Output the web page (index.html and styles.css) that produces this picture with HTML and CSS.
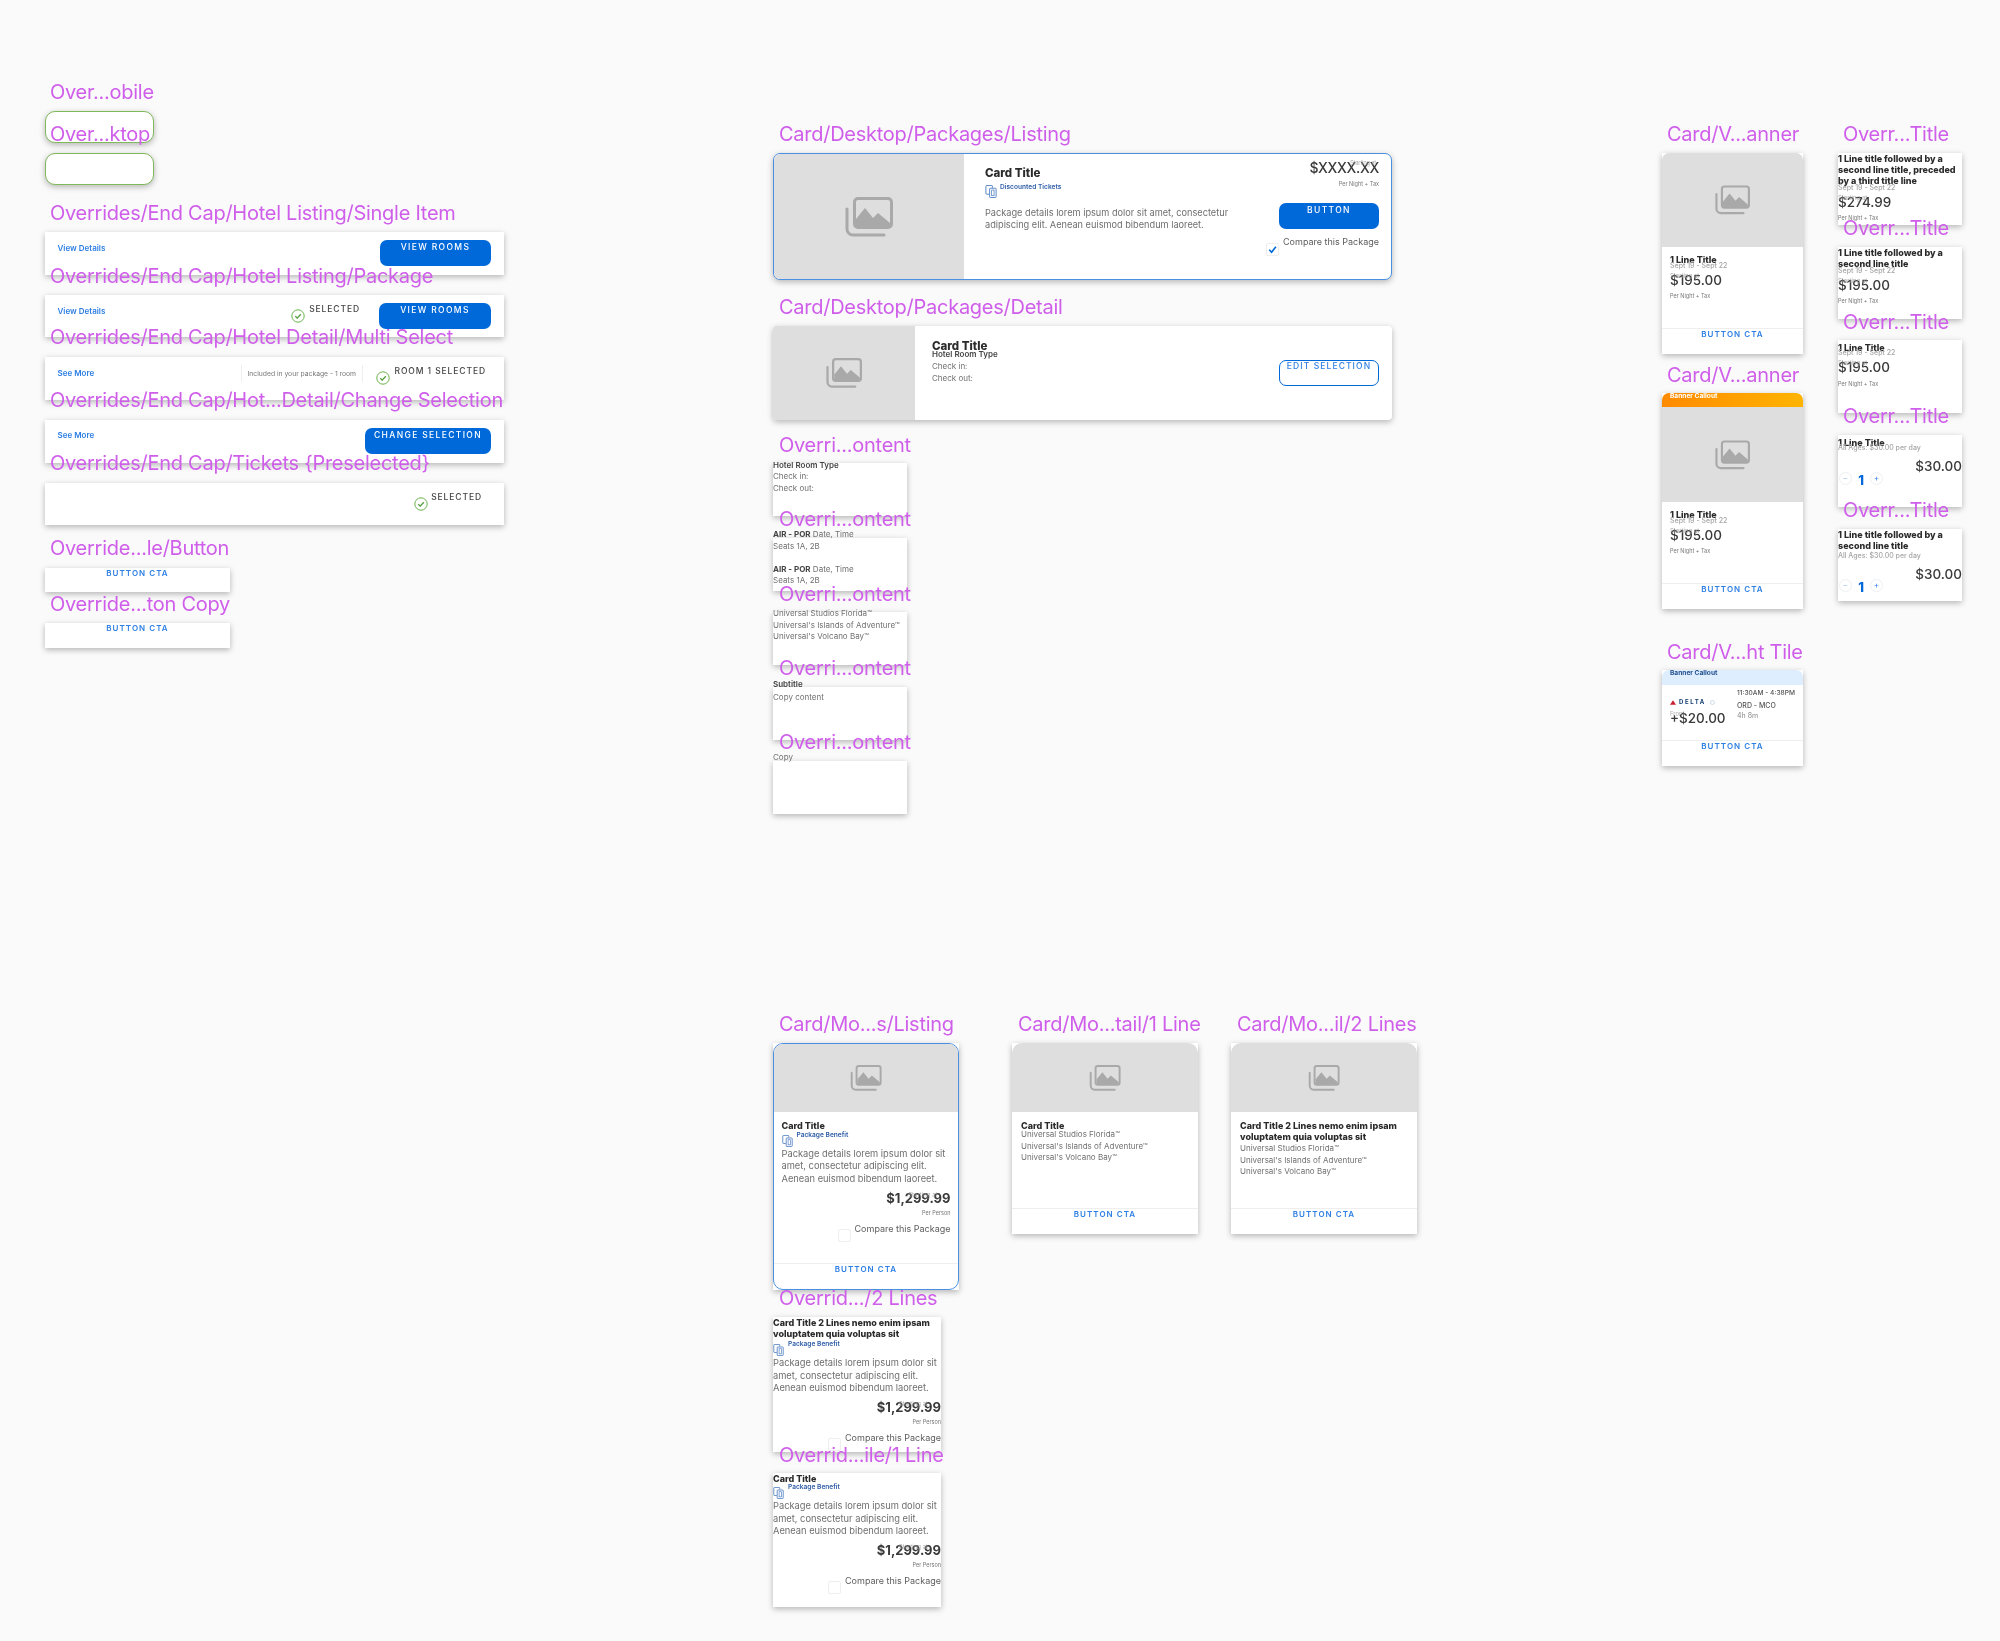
FILE: index.html
```html
<!DOCTYPE html>
<html lang="en">
<head>
<meta charset="utf-8">
<title>Card components</title>
<link rel="stylesheet" href="styles.css">
</head>
<body>
<svg class="defs" aria-hidden="true">
  <symbol id="ph" viewBox="0 0 48 40">
    <path d="M2 12v20a6 6 0 0 0 6 6h31" fill="none" stroke="#a9a9a9" stroke-width="3" stroke-linecap="round"/>
    <rect x="9.5" y="1.5" width="37" height="29" rx="3.5" fill="#dedede" stroke="#a9a9a9" stroke-width="3"/>
    <path d="M11 29V22l9-11 8 10 5-5 12 10v3a1 1 0 0 1-1 1H12a1 1 0 0 1-1-1z" fill="#a9a9a9"/>
  </symbol>
  <symbol id="tk" viewBox="0 0 12 14">
    <path d="M7.5 3V1.2a.7.7 0 0 0-.7-.7H1.2a.7.7 0 0 0-.7.7v8a.7.7 0 0 0 .7.7H4" fill="none" stroke="#4f7fc4" stroke-width="1"/>
    <rect x="4.5" y="3.5" width="7" height="10" rx=".8" fill="#fff" stroke="#4f7fc4" stroke-width="1"/>
    <rect x="6.7" y="5.5" width="2.6" height="6" fill="none" stroke="#4f7fc4" stroke-width=".8"/>
  </symbol>
  <symbol id="ok" viewBox="0 0 14 14">
    <circle cx="7" cy="7" r="6.2" fill="#fff" stroke="#69b34c" stroke-width="1"/>
    <path d="M4.3 7.3l1.9 1.8 3.6-3.8" fill="none" stroke="#4f9e38" stroke-width="1.3"/>
  </symbol>
</svg>
<main class="canvas">

<div class="f fm1"></div>
<div class="f fm2"></div>

<div class="f ec ec1"><a class="lnk">View Details</a><span class="ecr"><span class="btn b111">VIEW ROOMS</span></span></div>
<div class="f ec ec2"><a class="lnk">View Details</a><span class="ecr"><svg class="okc okc2"><use href="#ok"/></svg><span class="sel sel2">SELECTED</span><span class="btn b112">VIEW ROOMS</span></span></div>
<div class="f ec ec3"><a class="lnk">See More</a><span class="ecr ecr3"><span class="inc">Included in your package - 1 room</span><svg class="okc okc3"><use href="#ok"/></svg><span class="sel">ROOM 1 SELECTED</span></span></div>
<div class="f ec ec4"><a class="lnk lnk4">See More</a><span class="ecr"><span class="btn b126">CHANGE SELECTION</span></span></div>
<div class="f ec ec5"><span class="ecr ecr5"><svg class="okc okc5"><use href="#ok"/></svg><span class="sel">SELECTED</span></span></div>
<div class="f bf bf1"><span class="cta">BUTTON CTA</span></div>
<div class="f bf bf2"><span class="cta">BUTTON CTA</span></div>

<article class="f dk dl">
  <div class="dimg dimg1"><svg class="ph ph48"><use href="#ph"/></svg></div>
  <div class="dmain">
    <h3 class="ttl ttl-d">Card Title</h3>
    <div class="ben"><svg class="tk"><use href="#tk"/></svg><span class="bent">Discounted Tickets</span></div>
    <p class="desc desc-d">Package details lorem ipsum dolor sit amet, consectetur adipiscing elit. Aenean euismod bibendum laoreet.</p>
  </div>
  <div class="dside">
    <div class="price p-d"><span class="pre">Starting at</span>$XXXX.XX</div>
    <div class="per">Per Night + Tax</div>
    <span class="btn b100">BUTTON</span>
    <div class="cmp cmp-d"><span class="cb cb-on"><svg viewBox="0 0 12 12"><path d="M2.5 6.3l2.5 2.7 4.7-6" fill="none" stroke="#0069d9" stroke-width="1.8"/></svg></span><span class="cmpt">Compare this Package</span></div>
  </div>
</article>

<article class="f dk dd">
  <div class="dimg dimg2"><svg class="ph ph36"><use href="#ph"/></svg></div>
  <div class="dmain dmain2">
    <h3 class="ttl ttl-d">Card Title</h3>
    <div class="sub sub-d">Hotel Room Type</div>
    <p class="ln ln-d">Check in:</p>
    <p class="ln">Check out:</p>
  </div>
  <div class="dside dside2"><span class="btn-o">EDIT SELECTION</span></div>
</article>

<div class="f oc oc1"><div class="sub sub-o">Hotel Room Type</div><p class="ln ln-o">Check in:</p><p class="ln">Check out:</p></div>
<div class="f oc oc2"><p class="ln ln-a"><b>AIR - POR</b> Date, Time</p><p class="ln">Seats 1A, 2B</p><p class="ln ln-gap"><b>AIR - POR</b> Date, Time</p><p class="ln">Seats 1A, 2B</p></div>
<div class="f oc oc3"><p class="ln ln-u">Universal Studios Florida™</p><p class="ln">Universal's Islands of Adventure™</p><p class="ln">Universal's Volcano Bay™</p></div>
<div class="f oc oc4"><div class="sub sub-s">Subtitle</div><p class="ln ln-c">Copy content</p></div>
<div class="f oc oc5"><p class="ln ln-a">Copy</p></div>

<article class="f vc vc1"><div class="vin">
  <div class="vimg"><svg class="ph ph35"><use href="#ph"/></svg></div>
  <div class="vbody"><h3 class="ttl ttl-v">1 Line Title</h3><div class="sept">Sept 19 - Sept 22</div><div class="price p-v"><span class="pre pre-l">Starting at</span>$195.00</div><div class="per per-v">Per Night + Tax</div></div>
  <div class="foot"><span class="cta">BUTTON CTA</span></div>
</div></article>

<article class="f vc vc2"><div class="vin">
  <div class="banner b-or">Banner Callout</div>
  <div class="vimg"><svg class="ph ph35"><use href="#ph"/></svg></div>
  <div class="vbody"><h3 class="ttl ttl-v">1 Line Title</h3><div class="sept">Sept 19 - Sept 22</div><div class="price p-v"><span class="pre pre-l">Starting at</span>$195.00</div><div class="per per-v">Per Night + Tax</div></div>
  <div class="foot"><span class="cta">BUTTON CTA</span></div>
</div></article>

<article class="f vc vc3"><div class="vin">
  <div class="banner b-bl">Banner Callout</div>
  <div class="fl">
    <div class="fl-l">
      <div class="delta"><svg class="dt" viewBox="0 0 8 6"><path d="M4 0l4 6H0z" fill="#c8202f"/></svg><span class="dn">DELTA</span><span class="dg"></span></div>
      <div class="fprice"><span class="pre pre-l">From</span>+$20.00</div>
    </div>
    <div class="fl-r"><div class="ft">11:30AM - 4:38PM</div><div class="ft ft2">ORD - MCO</div><div class="fd">4h 8m</div></div>
  </div>
  <div class="foot foot-f"><span class="cta">BUTTON CTA</span></div>
</div></article>

<div class="f ot ot1"><h3 class="ttl ttl-o">1 Line title followed by a second line title, preceded by a third title line</h3><div class="sept sept-o">Sept 19 - Sept 22</div><div class="price p-v"><span class="pre pre-l">Starting at</span>$274.99</div><div class="per per-v">Per Night + Tax</div></div>
<div class="f ot ot2"><h3 class="ttl ttl-o">1 Line title followed by a second line title</h3><div class="sept sept-o">Sept 19 - Sept 22</div><div class="price p-v"><span class="pre pre-l">Starting at</span>$195.00</div><div class="per per-v">Per Night + Tax</div></div>
<div class="f ot ot3"><h3 class="ttl ttl-v ttl-o1">1 Line Title</h3><div class="sept sept-1">Sept 19 - Sept 22</div><div class="price p-v"><span class="pre pre-l">Starting at</span>$195.00</div><div class="per per-v per-1">Per Night + Tax</div></div>
<div class="f ot ot4"><h3 class="ttl ttl-v ttl-o1">1 Line Title</h3><div class="sept sept-1">All Ages: $30.00 per day</div><div class="qrow"><div class="qty qty1"><span class="qb qb-m">−</span><span class="qn">1</span><span class="qb">+</span></div><div class="price p-v">$30.00</div></div></div>
<div class="f ot ot5"><h3 class="ttl ttl-o">1 Line title followed by a second line title</h3><div class="sept sept-5">All Ages: $30.00 per day</div><div class="qrow"><div class="qty qty5"><span class="qb qb-m">−</span><span class="qn">1</span><span class="qb">+</span></div><div class="price p-v">$30.00</div></div></div>

<article class="f mc ml"><div class="min min-b">
  <div class="mimg"><svg class="ph ph32"><use href="#ph"/></svg></div>
  <div class="mbody mbody-l">
    <h3 class="ttl ttl-m">Card Title</h3>
    <div class="ben ben-m"><svg class="tk tk-m"><use href="#tk"/></svg><span class="bent bent-m">Package Benefit</span></div>
    <p class="desc desc-m">Package details lorem ipsum dolor sit amet, consectetur adipiscing elit. Aenean euismod bibendum laoreet.</p>
    <div class="price p-m"><span class="pre">Starting at</span>$1,299.99</div>
    <div class="per per-m">Per Person</div>
    <div class="cmp cmp-m"><span class="cb"></span><span class="cmpt">Compare this Package</span></div>
  </div>
  <div class="foot"><span class="cta">BUTTON CTA</span></div>
</div></article>

<article class="f mc md1"><div class="min">
  <div class="mimg"><svg class="ph ph32"><use href="#ph"/></svg></div>
  <div class="mbody mbody-d">
    <h3 class="ttl ttl-m">Card Title</h3>
    <p class="ln ln-1">Universal Studios Florida™</p><p class="ln">Universal's Islands of Adventure™</p><p class="ln">Universal's Volcano Bay™</p>
  </div>
  <div class="foot"><span class="cta">BUTTON CTA</span></div>
</div></article>

<article class="f mc md2"><div class="min">
  <div class="mimg"><svg class="ph ph32"><use href="#ph"/></svg></div>
  <div class="mbody mbody-d">
    <h3 class="ttl ttl-o">Card Title 2 Lines nemo enim ipsam voluptatem quia voluptas sit</h3>
    <p class="ln ln-2">Universal Studios Florida™</p><p class="ln">Universal's Islands of Adventure™</p><p class="ln">Universal's Volcano Bay™</p>
  </div>
  <div class="foot"><span class="cta">BUTTON CTA</span></div>
</div></article>

<div class="f om om2"><h3 class="ttl ttl-o">Card Title 2 Lines nemo enim ipsam voluptatem quia voluptas sit</h3>
  <div class="ben ben-o2"><svg class="tk tk-m"><use href="#tk"/></svg><span class="bent bent-m">Package Benefit</span></div>
  <p class="desc desc-m">Package details lorem ipsum dolor sit amet, consectetur adipiscing elit. Aenean euismod bibendum laoreet.</p>
  <div class="price p-m"><span class="pre">Starting at</span>$1,299.99</div><div class="per per-m">Per Person</div>
  <div class="cmp cmp-m"><span class="cb"></span><span class="cmpt">Compare this Package</span></div></div>
<div class="f om om1"><h3 class="ttl ttl-o">Card Title</h3>
  <div class="ben ben-m"><svg class="tk tk-m"><use href="#tk"/></svg><span class="bent bent-m">Package Benefit</span></div>
  <p class="desc desc-m">Package details lorem ipsum dolor sit amet, consectetur adipiscing elit. Aenean euismod bibendum laoreet.</p>
  <div class="price p-m"><span class="pre">Starting at</span>$1,299.99</div><div class="per per-m">Per Person</div>
  <div class="cmp cmp-m"><span class="cb"></span><span class="cmpt">Compare this Package</span></div></div>

<span class="lbl a1">Over...obile</span>
<span class="lbl a2">Over...ktop</span>
<span class="lbl a3">Overrides/End Cap/Hotel Listing/Single Item</span>
<span class="lbl a4">Overrides/End Cap/Hotel Listing/Package</span>
<span class="lbl a5">Overrides/End Cap/Hotel Detail/Multi Select</span>
<span class="lbl a6">Overrides/End Cap/Hot...Detail/Change Selection</span>
<span class="lbl a7">Overrides/End Cap/Tickets {Preselected}</span>
<span class="lbl a8">Override...le/Button</span>
<span class="lbl a9">Override...ton Copy</span>
<span class="lbl c1">Card/Desktop/Packages/Listing</span>
<span class="lbl c2">Card/Desktop/Packages/Detail</span>
<span class="lbl c3">Overri...ontent</span>
<span class="lbl c4">Overri...ontent</span>
<span class="lbl c5">Overri...ontent</span>
<span class="lbl c6">Overri...ontent</span>
<span class="lbl c7">Overri...ontent</span>
<span class="lbl r1">Card/V...anner</span>
<span class="lbl r2">Card/V...anner</span>
<span class="lbl r3">Card/V...ht Tile</span>
<span class="lbl s1">Overr...Title</span>
<span class="lbl s2">Overr...Title</span>
<span class="lbl s3">Overr...Title</span>
<span class="lbl s4">Overr...Title</span>
<span class="lbl s5">Overr...Title</span>
<span class="lbl m1">Card/Mo...s/Listing</span>
<span class="lbl m2">Card/Mo...tail/1 Line</span>
<span class="lbl m3">Card/Mo...il/2 Lines</span>
<span class="lbl m4">Overrid.../2 Lines</span>
<span class="lbl m5">Overrid...ile/1 Line</span>
</main>
</body>
</html>
```
FILE: styles.css
```css
* { box-sizing: border-box; }
html, body { margin: 0; padding: 0; background: #fafafa; }
body { font-family: "Inter", "Liberation Sans", sans-serif; color: #666; }
h3, p { margin: 0; font-weight: normal; }
.defs { position: absolute; width: 0; height: 0; }
.canvas { position: relative; width: 2000px; height: 1641px; overflow: hidden; background: #fafafa; filter: blur(.45px); }

/* free-canvas frames */
.f { position: absolute; background: #fff; box-shadow: 0 2px 6px rgba(0,0,0,.28); }
.lbl { position: absolute; font-size: 20px; line-height: 24px; letter-spacing: -.26px; color: #cf5eea; white-space: nowrap; }
.a1,.a2,.a3,.a4,.a5,.a6,.a7,.a8,.a9 { left: 50px; }
.a1 { top: 80px; } .a2 { top: 122px; } .a3 { top: 201px; } .a4 { top: 264px; } .a5 { top: 325px; }
.a6 { top: 388px; } .a7 { top: 451px; } .a8 { top: 536px; } .a9 { top: 592px; }
.c1,.c2,.c3,.c4,.c5,.c6,.c7,.m1,.m4,.m5 { left: 779px; }
.c1 { top: 122px; } .c2 { top: 295px; } .c3 { top: 433px; } .c4 { top: 507px; } .c5 { top: 582px; } .c6 { top: 656px; } .c7 { top: 730px; }
.r1,.r2,.r3 { left: 1667px; }
.r1 { top: 122px; } .r2 { top: 363px; } .r3 { top: 640px; }
.s1,.s2,.s3,.s4,.s5 { left: 1843px; }
.s1 { top: 122px; } .s2 { top: 216px; } .s3 { top: 310px; } .s4 { top: 404px; } .s5 { top: 498px; }
.m1,.m2,.m3 { top: 1012px; } .m2 { left: 1018px; } .m3 { left: 1237px; }
.m4 { top: 1286px; } .m5 { top: 1443px; }

.fm1,.fm2 { left: 45px; width: 109px; height: 32px; border: 1.5px solid #7fb95a; border-radius: 10px; }
.fm1 { top: 111px; } .fm2 { top: 153px; }

/* end caps */
.ec { left: 45px; width: 459px; display: flex; align-items: flex-start; padding: 8px 13px 0 12.5px; }
.ec1 { top: 232px; height: 43px; } .ec2 { top: 295px; height: 42px; } .ec3 { top: 357px; height: 43px; }
.ec4 { top: 420px; height: 43px; } .ec5 { top: 483px; height: 42px; }
.lnk { font-size: 8px; line-height: 16px; font-weight: 600; color: #2d7fe3; }
.lnk4 { margin-top: -1px; }
.ecr { margin-left: auto; display: flex; align-items: flex-start; }
.btn { display: block; height: 26px; border-radius: 7px; background: #0069d9; color: #fff; font-size: 8.5px; font-weight: 500; letter-spacing: 1.35px; text-align: center; line-height: 13px; padding-top: 1px; white-space: nowrap; }
.b111 { width: 111px; } .b112 { width: 112px; margin-left: 19px; } .b126 { width: 126px; }
.b100 { width: 100px; margin-top: 15px; }
.okc { display: block; width: 14px; height: 14px; margin-right: 4px; }
.okc2 { margin-top: 6px; } .okc3 { margin-top: 6px; margin-left: 13px; margin-right: 5px; } .okc5 { margin-top: 6px; margin-right: 3px; }
.sel { font-size: 8.5px; line-height: 13px; font-weight: 500; letter-spacing: .9px; color: #444; white-space: nowrap; }
.ecr3 { padding-right: 5px; }
.ecr5 { padding-right: 9px; }
.inc { width: 122px; font-size: 6.75px; line-height: 17px; height: 17px; padding: 0 6px; color: #777; border-left: 1px solid #eee; border-right: 1px solid #eee; white-space: nowrap; }
.bf { left: 45px; width: 185px; text-align: center; }
.bf1 { top: 568px; height: 24px; } .bf2 { top: 623px; height: 25px; }
.cta { display: block; font-size: 8px; font-weight: 600; letter-spacing: 1.05px; color: #2d7fe3; line-height: 11px; white-space: nowrap; text-align: center; }

/* shared text */
.ttl { font-weight: 800; color: #2b2b2b; }
.ttl-d { font-size: 11.5px; line-height: 12px; }
.ttl-v { font-size: 9px; line-height: 10px; }
.ttl-o { font-size: 9px; line-height: 11px; }
.ttl-m { font-size: 9px; line-height: 12px; }
.ttl-o1 { padding-top: 3px; box-sizing: content-box; }
.sub { font-size: 8px; line-height: 9px; font-weight: 600; color: #444; }
.ln { font-size: 8px; line-height: 11.5px; color: #707070; white-space: nowrap; }
.ln b { font-weight: 700; color: #444; }
.desc { color: #6e6e6e; }
.desc-d { width: 256px; margin-top: 9px; font-size: 9.2px; line-height: 12.2px; }
.desc-m { width: 168px; margin-top: 1px; font-size: 9.3px; line-height: 12.7px; }
.ben { display: flex; gap: 3px; margin-top: 6px; }
.tk { display: block; width: 12px; height: 13px; }
.tk-m { width: 11px; height: 12px; }
.bent { font-size: 6.6px; line-height: 8px; font-weight: 600; color: #2f5ea8; margin-top: -2px; white-space: nowrap; }
.bent-m { margin-top: -4px; }
.ben-m { margin-top: 3px; gap: 4px; }
.ben-o2 { margin-top: 5px; gap: 4px; }
.price { position: relative; color: #3a3a3a; font-weight: 500; white-space: nowrap; }
.pre { position: absolute; right: 3px; top: 0; font-size: 6px; line-height: 8px; font-weight: 400; color: #999; opacity: .8; }
.pre-l { left: 0; right: auto; }
.p-d { font-size: 14px; line-height: 18px; letter-spacing: -.3px; text-align: right; }
.p-v { font-size: 13.5px; line-height: 16px; margin-top: 2px; }
.p-m { font-size: 13px; line-height: 16px; margin-top: 4px; text-align: right; font-weight: 700; }
.p-m .pre { right: 13px; top: 1px; }
.per { font-size: 5.5px; line-height: 8px; color: #777; margin-top: 3px; text-align: right; white-space: nowrap; }
.per-v { margin-top: 4px; text-align: left; }
.per-m { margin-top: 3px; }
.per-1 { margin-top: 5px; }
.sept { font-size: 7px; line-height: 8px; font-weight: 500; color: #a5a5a5; margin-top: -3px; white-space: nowrap; }
.sept-o { margin-top: -2px; }
.sept-1 { margin-top: -4px; }
.sept-5 { margin-top: 1px; }
.cmp { display: flex; justify-content: flex-end; gap: 4px; white-space: nowrap; }
.cmpt { font-size: 9px; line-height: 12px; color: #5c5c5c; }
.cb { display: block; width: 13px; height: 13px; background: #fff; border: 1px solid #eee; border-radius: 2px; margin-top: 7px; }
.cb svg { display: block; width: 11px; height: 11px; }
.cmp-d { margin-top: 7px; }
.cmp-m { margin-top: 6px; }
.cmp-m .cb { margin-top: 6px; }

/* desktop cards */
.dk { left: 773px; width: 619px; display: flex; overflow: hidden; }
.dl { top: 153px; height: 127px; border: 1.5px solid #4a90e2; border-radius: 7px; }
.dd { top: 326px; height: 94px; border-radius: 4px; }
.dimg { background: #dedede; display: flex; align-items: center; justify-content: center; flex: none; }
.dimg1 { width: 190px; } .dimg2 { width: 142px; }
.ph { display: block; }
.ph48 { width: 48px; height: 40px; } .ph36 { width: 36px; height: 30px; } .ph35 { width: 35px; height: 30px; } .ph32 { width: 32px; height: 26px; }
.dmain { flex: 1; padding: 13px 0 0 21px; }
.dmain2 { padding: 14px 0 0 17px; }
.sub-d { margin-top: -2px; }
.ln-d { margin-top: 2px; }
.dside { display: flex; flex-direction: column; align-items: flex-end; padding: 5px 12px 0 0; width: 112px; flex: none; }
.dside2 { padding: 34px 13px 0 0; width: 113px; }
.btn-o { display: block; width: 100px; height: 26px; border: 1.5px solid #0069d9; border-radius: 7px; text-align: center; font-size: 8.5px; line-height: 11px; font-weight: 500; letter-spacing: 1.1px; color: #2d7fe3; white-space: nowrap; }

/* override content */
.oc { left: 773px; width: 134px; height: 53px; }
.oc1 { top: 463px; } .oc2 { top: 538px; } .oc3 { top: 612px; } .oc4 { top: 687px; } .oc5 { top: 761px; }
.sub-o { margin-top: -2px; } .ln-o { margin-top: 1px; }
.ln-a { margin-top: -9px; } .ln-gap { margin-top: 11.5px; } .ln-u { margin-top: -4px; }
.sub-s { margin-top: -7px; } .ln-c { margin-top: 3px; }

/* vertical cards */
.vc { left: 1662px; width: 141px; }
.vc1 { top: 153px; height: 201px; } .vc2 { top: 393px; height: 216px; } .vc3 { top: 670px; height: 96px; }
.vin { height: 100%; display: flex; flex-direction: column; border-radius: 7px; overflow: hidden; }
.vimg { height: 94px; background: #dedede; display: flex; align-items: center; justify-content: center; flex: none; }
.vc2 .vimg { height: 95px; }
.vbody { flex: 1; padding: 8px 8px 0; }
.foot { height: 26px; flex: none; border-top: 1px solid #eee; }
.banner { height: 14px; font-size: 6.6px; line-height: 6px; font-weight: 700; padding-left: 8px; flex: none; }
.b-or { background: linear-gradient(90deg, #ff8a00, #ffb400); color: #fff; }
.b-bl { height: 15px; background: #deeeff; color: #23508f; }
.fl { flex: 1; display: flex; padding: 3px 0 0 8px; }
.fl-l { width: 67px; flex: none; }
.delta { display: flex; align-items: center; gap: 3px; margin-top: 10px; height: 8px; }
.dt { display: block; width: 6px; height: 5px; }
.dn { font-size: 6px; line-height: 8px; font-weight: 700; letter-spacing: 1.6px; color: #123d73; }
.dg { width: 5px; height: 5px; border-radius: 50%; border: 1px solid #cfdbe8; margin-left: 1px; }
.fprice { position: relative; font-size: 13.5px; line-height: 16px; margin-top: 4px; color: #3a3a3a; font-weight: 500; white-space: nowrap; }
.ft { font-size: 6.6px; line-height: 9px; font-weight: 500; color: #555; white-space: nowrap; margin-top: 1px; }
.ft2 { margin-top: 3px; font-size: 7px; }
.fd { font-size: 7px; line-height: 9px; color: #888; margin-top: 1px; }

/* vertical overrides */
.ot { left: 1838px; width: 124px; height: 72px; }
.ot1 { top: 153px; } .ot2 { top: 247px; } .ot3 { top: 340px; height: 73px; } .ot4 { top: 435px; } .ot5 { top: 529px; }
.qrow { display: flex; justify-content: space-between; align-items: flex-start; margin-top: 6px; }
.qrow .p-v { margin-top: 0; }
.qty { display: flex; align-items: center; padding-left: 1px; }
.qty1 { margin-top: 12.5px; } .qty5 { margin-top: 11.5px; }
.qb { display: block; width: 13px; height: 13px; border-radius: 50%; border: 1px solid #eef0f2; font-size: 8px; line-height: 10px; text-align: center; color: #2d7fe3; background: #fff; }
.qb-m { color: #9fc4ee; }
.qn { width: 18px; text-align: center; font-size: 13px; line-height: 14px; font-weight: 800; color: #0069d9; margin-top: 2px; }

/* mobile cards */
.mc { top: 1043px; width: 186px; }
.ml { left: 773px; height: 247px; }
.md1 { left: 1012px; height: 191px; }
.md2 { left: 1231px; height: 191px; }
.min { height: 100%; display: flex; flex-direction: column; border-radius: 10px; overflow: hidden; }
.min-b { border: 1.5px solid #4a90e2; }
.mimg { height: 69px; background: #dedede; display: flex; align-items: center; justify-content: center; flex: none; }
.min-b .mimg { height: 67.5px; }
.mbody { flex: 1; }
.mbody-l { padding: 8px 7.5px 0; }
.mbody-d { padding: 8px 9px 0; }
.ln-1 { margin-top: -3px; } .ln-2 { margin-top: 1px; }
.om { left: 773px; width: 168px; }
.om2 { top: 1317px; height: 135px; } .om1 { top: 1473px; height: 134px; }
```
